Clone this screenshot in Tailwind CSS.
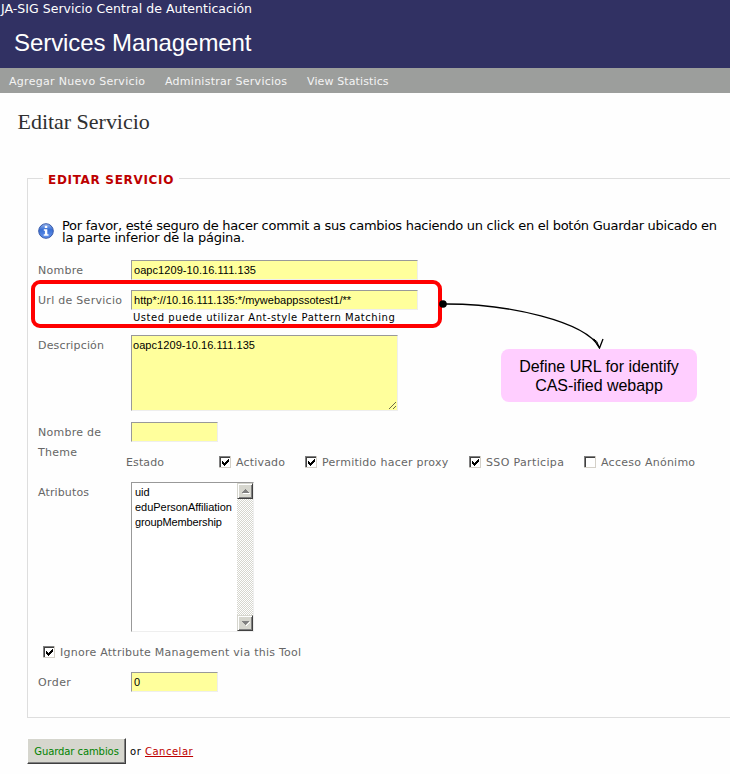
<!DOCTYPE html>
<html lang="es">
<head>
<meta charset="utf-8">
<title>Services Management</title>
<script src="https://cdn.jsdelivr.net/npm/@tailwindcss/browser@4"></script>
</head>
<body class="relative w-[730px] h-[774px] overflow-hidden bg-[#fefefe] font-['DejaVu_Sans',sans-serif] text-[11px] leading-5 tracking-[0.25px] text-[#666] whitespace-nowrap">

<svg class="hidden">
  <symbol id="check" viewBox="0 0 12 12" shape-rendering="crispEdges">
    <path d="M0 0h12v12H0z" fill="#d4d0c8"/>
    <path d="M0 0h11v11H0z" fill="#808080"/>
    <path d="M1 1h10v10H1z" fill="#404040"/>
    <path d="M2 2h9v9H2z" fill="#fff"/>
  </symbol>
  <symbol id="tick" viewBox="0 0 12 12" shape-rendering="crispEdges">
    <path d="M3 5h1v3H3zM4 6h1v3H4zM5 7h1v3H5zM6 6h1v3H6zM7 5h1v3H7zM8 4h1v3H8zM9 3h1v3H9z" fill="#000"/>
  </symbol>
</svg>

<header class="h-[68px] bg-[#313163] text-white">
  <p class="h-[18px] pl-px text-[12.5px] leading-[18px] tracking-[0.025px]">JA-SIG Servicio Central de Autenticación</p>
  <h1 class="pl-[14px] pt-[9px] font-['Liberation_Sans',sans-serif] text-[24px] leading-8 tracking-[-0.07px]">Services Management</h1>
</header>
<nav class="flex h-[25px] items-center gap-5 bg-[#9c9e9c] pl-[9px] pt-[2px] text-[#f4f4f4]">
  <a class="w-[136px] tracking-[0.3px]">Agregar Nuevo Servicio</a>
  <a class="w-[122px] tracking-[0.26px]">Administrar Servicios</a>
  <a class="tracking-[0.12px]">View Statistics</a>
</nav>

<main>
  <h2 class="h-[85px] pl-[17.5px] pt-[14px] font-['Liberation_Serif',serif] text-[22px] leading-[30px] tracking-[-0.02px] text-[#303030]">Editar Servicio</h2>

  <section class="ml-[27px] h-[540px] w-[720px] border border-[#dedede] pl-[10px]">
    <h3 class="-mt-[9px] ml-[5px] h-5 w-[136px] bg-[#fefefe] pl-[5px] text-[12px] font-bold tracking-[0.68px] text-[#bd0000]">EDITAR SERVICIO</h3>

    <div class="mt-[30px] flex h-10 text-[13px] leading-3 text-black">
      <svg class="mt-[3px] mr-2 size-4 shrink-0" viewBox="0 0 16 16">
        <defs><linearGradient id="ball" x2="0" y2="1"><stop stop-color="#9cb9ef"/><stop offset=".4" stop-color="#396fd4"/><stop offset="1" stop-color="#6594ed"/></linearGradient></defs>
        <circle cx="8" cy="8" r="7.3" fill="url(#ball)" stroke="#385aa9" stroke-width="1"/>
        <path d="M6.8 2.8h2.5v2.3H6.8zM5.8 6.2h3.5v5h1.2v1.5H5.7v-1.5h1.2V7.7H5.8z" fill="#fff"/>
      </svg>
      <p><span class="tracking-[-0.27px]">Por favor, esté seguro de hacer commit a sus cambios haciendo un click en el botón Guardar ubicado en</span><br><span class="tracking-[-0.23px]">la parte inferior de la página.</span></p>
    </div>

    <div class="flex h-[30px]">
      <span class="w-[93px] pt-px">Nombre</span>
      <div class="h-5 w-[287px] border border-[#eee] border-l-[#999] border-t-[#999] bg-[#ffff9c] pl-[2px] font-['Liberation_Sans',sans-serif] leading-[18px] tracking-[0.06px] text-black">oapc1209-10.16.111.135</div>
    </div>
    <div class="flex h-[45px]">
      <span class="w-[93px] pt-px tracking-[0.28px]">Url de Servicio</span>
      <div>
        <div class="h-5 w-[287px] border border-[#eee] border-l-[#999] border-t-[#999] bg-[#ffff9c] pl-[2px] font-['Liberation_Sans',sans-serif] leading-[18px] tracking-[0.01px] text-black">http*://10.16.111.135:*/mywebappssotest1/**</div>
        <p class="pl-[2px] pt-px text-[10px] leading-[14px] tracking-[0.54px] text-black">Usted puede utilizar Ant-style Pattern Matching</p>
      </div>
    </div>
    <div class="flex h-[87px]">
      <span class="w-[93px] pt-px tracking-[0.16px]">Descripción</span>
      <div class="flex h-[76px] w-[267px] items-end justify-between border border-[#eee] border-l-[#999] border-t-[#999] bg-[#ffff9c] pl-px font-['Liberation_Sans',sans-serif] leading-[18px] tracking-[0.06px] text-black">
        <span class="self-start">oapc1209-10.16.111.135</span>
        <svg class="mb-px mr-px size-[7px]" viewBox="0 0 7 7"><path d="M0 7 7 0M4 7l3-3" stroke="#5a5a42" stroke-width=".9"/></svg>
      </div>
    </div>
    <div class="flex h-[30px]">
      <span class="w-[93px] pt-px">Nombre de<br>Theme</span>
      <div class="h-5 w-[87px] border border-[#eee] border-l-[#999] border-t-[#999] bg-[#ffff9c]"></div>
    </div>
    <div class="flex h-[30px] pl-[88px]">
      <span class="w-[93px] pt-px tracking-[0.1px]">Estado</span>
      <label class="flex w-[86px] gap-[5px]"><svg class="mt-1 size-3"><use href="#check"/><use href="#tick"/></svg><span class="pt-px tracking-[0.18px]">Activado</span></label>
      <label class="flex w-[164px] gap-[5px]"><svg class="mt-1 size-3"><use href="#check"/><use href="#tick"/></svg><span class="pt-px tracking-[0.27px]">Permitido hacer proxy</span></label>
      <label class="flex w-[115px] gap-[5px]"><svg class="mt-1 size-3"><use href="#check"/><use href="#tick"/></svg><span class="pt-px tracking-[0.35px]">SSO Participa</span></label>
      <label class="flex gap-[5px]"><svg class="mt-1 size-3"><use href="#check"/></svg><span class="pt-px">Acceso Anónimo</span></label>
    </div>
    <div class="flex h-[160px]">
      <span class="w-[93px] pt-px tracking-[0.13px]">Atributos</span>
      <div class="flex h-[150px] w-[123px] border border-[#eee] border-l-[#999] border-t-[#999] bg-white">
        <ul class="w-[105px] pl-[3px] pt-[2px] font-['Liberation_Sans',sans-serif] leading-[15px] tracking-[-0.035px] text-black">
          <li>uid</li>
          <li>eduPersonAffiliation</li>
          <li class="tracking-[-0.13px]">groupMembership</li>
        </ul>
        <div class="flex w-4 flex-col justify-between bg-[repeating-conic-gradient(#d6d6ce_0_25%,#fff_0_50%)] bg-[size:2px_2px]">
          <div class="flex size-4 items-center justify-center border border-b-[#404040] border-r-[#404040] border-l-[#d6d6ce] border-t-[#d6d6ce] bg-[#d6d6ce] shadow-[inset_1px_1px_#fff,inset_-1px_-1px_#808080]"><svg class="h-1 w-[7px]" viewBox="0 0 7 4" overflow="visible" shape-rendering="crispEdges"><path d="M1 4h7v1H1z" fill="#fff"/><path d="M3 0h1v1h1v1h1v1h1v1H0V3h1V2h1V1h1z" fill="#808080"/></svg></div>
          <div class="flex size-4 items-center justify-center border border-b-[#404040] border-r-[#404040] border-l-[#d6d6ce] border-t-[#d6d6ce] bg-[#d6d6ce] shadow-[inset_1px_1px_#fff,inset_-1px_-1px_#808080]"><svg class="h-1 w-[7px]" viewBox="0 0 7 4" overflow="visible" shape-rendering="crispEdges"><path d="M7 1h1v1H7v1H6v1H5v1H4V4h1V3h1V2h1z" fill="#fff"/><path d="M0 0h7v1H6v1H5v1H4v1H3V3H2V2H1V1H0z" fill="#808080"/></svg></div>
        </div>
      </div>
    </div>
    <label class="flex h-[30px] gap-[5px] pl-[5px]"><svg class="mt-1 size-3"><use href="#check"/><use href="#tick"/></svg><span class="pt-px tracking-[0.245px]">Ignore Attribute Management via this Tool</span></label>
    <div class="flex h-[30px]">
      <span class="w-[93px] pt-px tracking-[0.4px]">Order</span>
      <div class="h-5 w-[87px] border border-[#eee] border-l-[#999] border-t-[#999] bg-[#ffff9c] pl-[2px] font-['Liberation_Sans',sans-serif] leading-[18px] text-black">0</div>
    </div>
  </section>

  <div class="ml-[27px] mt-5 flex h-[26px] items-center text-[10px]">
    <button class="h-[26px] w-[99px] border border-b-[#404040] border-r-[#404040] border-l-white border-t-white bg-[#d6d6ce] pt-[2px] text-center tracking-[-0.08px] text-[#008200] shadow-[inset_-1px_-1px_#808080]">Guardar cambios</button>
    <span class="ml-1 w-[15px] pt-[2px] tracking-[0.6px] text-black">or</span>
    <a class="pt-[2px] tracking-[0.5px] text-[#bd0000] underline">Cancelar</a>
  </div>
</main>

<div class="absolute left-[31px] top-[280px] h-[48px] w-[411px] rounded-[9px] border-4 border-[#ff0000]"></div>
<svg class="absolute left-[430px] top-[290px] h-[70px] w-[190px]" viewBox="430 290 190 70" fill="none">
  <circle cx="443" cy="304" r="3.8" fill="#000"/>
  <path d="M443 304C510 303.500 585 322 599 347M593.500 339l6 9 3.500-9" stroke="#000" stroke-width="1.3"/>
  <path d="M593.500 339l5.800 8.500-2.500-6z" stroke="#000" stroke-width="1"/>
</svg>
<p class="absolute left-[501px] top-[349px] h-[53px] w-[196px] rounded-lg bg-[#ffceff] pt-2 text-center font-['Liberation_Sans',sans-serif] text-[16px] leading-[19px] tracking-[-0.03px] text-black">Define URL for identify<br>CAS-ified webapp</p>
</body>
</html>
